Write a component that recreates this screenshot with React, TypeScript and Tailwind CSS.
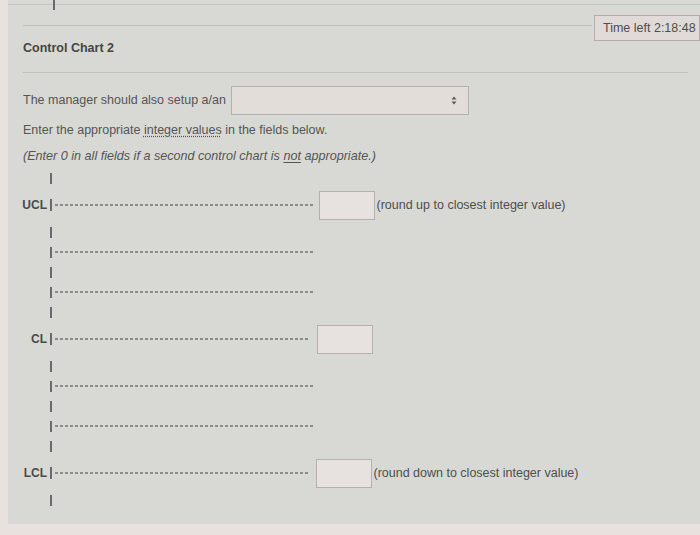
import React from "react";

const font = { fontFamily: '"Liberation Sans", Arial, sans-serif' };

const dashCls =
  "h-[1.5px] bg-[repeating-linear-gradient(90deg,#8c8c89_0_3px,transparent_3px_5px)]";

function Tick() {
  return (
    <div className="h-[20px] flex items-center">
      <div className="w-[42px]" />
      <div className="w-[1.5px] h-[11px] bg-[#6a6a68]" />
    </div>
  );
}

function Dash() {
  return (
    <div className="h-[20px] flex items-center">
      <div className="w-[42px]" />
      <div className="w-[1.5px] h-[11px] bg-[#6a6a68]" />
      <div className={`ml-[3px] w-[258px] ${dashCls}`} />
    </div>
  );
}

function Row({ label, note, lineW, gap }: { label: string; note?: string; lineW: number; gap: string }) {
  return (
    <div className="h-[34px] flex items-center">
      <div className="w-[39px] text-right text-[12px] leading-[14px] font-bold text-[#4a4a48]">{label}</div>
      <div className="ml-[3px] w-[1.5px] h-[12px] bg-[#6a6a68]" />
      <div className={`ml-[3px] ${dashCls}`} style={{ width: lineW }} />
      <div className={`${gap} w-[56px] h-[29px] bg-[#e7e2df] border border-[#b4b0ad]`} />
      {note && <div className="ml-[2px] text-[12.5px] leading-[14px] text-[#4e4e4c]">{note}</div>}
    </div>
  );
}

export default function App() {
  return (
    <div className="w-[700px] h-[535px] bg-[#e8e1de] overflow-hidden" style={font}>
      <div className="ml-[8px] w-[692px] h-[524px] bg-[#d8d9d5]">
        {/* top strip */}
        <div className="h-[5px] border-b border-[#c4c5c1] flex">
          <div className="ml-[45px] w-[1.5px] h-[10px] bg-[#6a6a68]" />
        </div>
        <div className="h-[36px] flex items-start">
          <div className="ml-[15px] mt-[20px] w-[569px] border-t border-[#c0c1bd]" />
          <div className="ml-[2px] mt-[10px] w-[106px] h-[26px] bg-[#e0dbd8] border border-[#b7a9a6] flex items-center pl-[8px] text-[12.5px] text-[#4e4e4c] whitespace-nowrap">
            Time left 2:18:48
          </div>
        </div>
        <div className="ml-[15px] text-[12.5px] leading-[14px] font-bold text-[#454543]">Control Chart 2</div>
        <div className="ml-[15px] mt-[17px] w-[665px] border-t border-[#c0c1bd]" />
        <div className="ml-[15px] mt-[13px] h-[29px] flex items-center">
          <span className="text-[12.5px] text-[#555553] whitespace-nowrap">The manager should also setup a/an</span>
          <div className="ml-[5px] w-[238px] h-[29px] bg-[#e2ddd8] border border-[#b3b1ad] flex items-center justify-end pr-[11px]">
            <svg width="6" height="9" viewBox="0 0 6 9">
              <path d="M3 0.5 L5.5 3.5 H0.5 Z" fill="#5a5a58" />
              <path d="M3 8.5 L5.5 5.5 H0.5 Z" fill="#5a5a58" />
            </svg>
          </div>
        </div>
        <div className="ml-[15px] mt-[7px] text-[12.5px] leading-[16px] text-[#555553] whitespace-nowrap">
          Enter the appropriate{" "}
          <span className="underline decoration-dotted underline-offset-2">integer values</span> in the fields below.
        </div>
        <div className="ml-[15px] mt-[10px] text-[12.6px] leading-[16px] italic text-[#555553] whitespace-nowrap">
          (Enter 0 in all fields if a second control chart is{" "}
          <span className="underline underline-offset-2">not</span> appropriate.)
        </div>
        <div className="mt-[4px]">
          <Tick />
          <Row label="UCL" note="(round up to closest integer value)" lineW={260} gap="ml-[4px]" />
          <Tick />
          <Dash />
          <Tick />
          <Dash />
          <Tick />
          <Row label="CL" lineW={255} gap="ml-[7px]" />
          <Tick />
          <Dash />
          <Tick />
          <Dash />
          <Tick />
          <Row label="LCL" note="(round down to closest integer value)" lineW={253} gap="ml-[8px]" />
          <Tick />
        </div>
      </div>
    </div>
  );
}
